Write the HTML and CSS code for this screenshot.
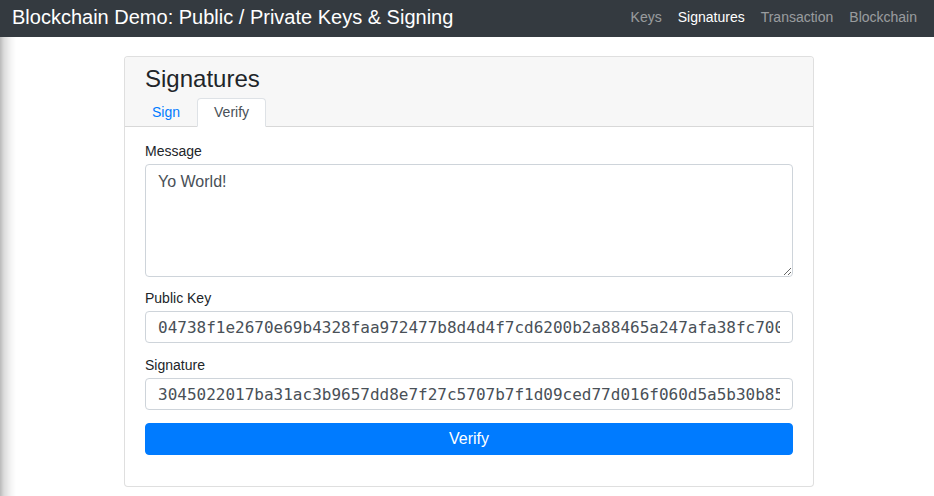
FILE: index.html
```html
<!DOCTYPE html>
<html lang="en">
<head>
<meta charset="utf-8">
<title>Blockchain Demo: Public / Private Keys &amp; Signing</title>
<link rel="stylesheet" href="styles.css">
</head>
<body>
<nav class="navbar">
  <a class="brand" href="#">Blockchain Demo: Public / Private Keys &amp; Signing</a>
  <ul class="nav-links">
    <li><a href="#">Keys</a></li>
    <li><a href="#" class="active">Signatures</a></li>
    <li><a href="#">Transaction</a></li>
    <li><a href="#">Blockchain</a></li>
  </ul>
</nav>
<div class="edge-shadow"></div>
<main class="main">
  <section class="card">
    <header class="card-header">
      <h4 class="card-title">Signatures</h4>
      <ul class="tabs">
        <li><a href="#" class="tab">Sign</a></li>
        <li><a href="#" class="tab tab-active">Verify</a></li>
      </ul>
    </header>
    <div class="card-body">
      <div class="group">
        <label class="label" for="msg">Message</label>
        <textarea id="msg" class="control textarea">Yo World!</textarea>
      </div>
      <div class="group group-mid">
        <label class="label" for="pub">Public Key</label>
        <input id="pub" class="control mono" type="text" value="04738f1e2670e69b4328faa972477b8d4d4f7cd6200b2a88465a247afa38fc7005d8a7e0c3b1a9f2e4d6c8b0a2e4f6d8c0b2a4e6f8d0c2b4a6e8f0d2c4b6a8e0">
      </div>
      <div class="group group-last">
        <label class="label" for="sig">Signature</label>
        <input id="sig" class="control mono" type="text" value="3045022017ba31ac3b9657dd8e7f27c5707b7f1d09ced77d016f060d5a5b30b85c0221009a7d3e5f1b2c4d6e8f0a1b3c5d7e9f0a2b4c6d8e0f1a3b5c7d9e">
      </div>
      <button class="btn" type="button">Verify</button>
    </div>
  </section>
</main>
</body>
</html>
```

FILE: styles.css
```css
* { box-sizing: border-box; }

html, body {
  margin: 0;
  padding: 0;
  background: #fff;
  color: #212529;
  font-family: "Liberation Sans", Arial, sans-serif;
  font-size: 14px;
}

.navbar {
  height: 37px;
  background: #343a40;
  display: flex;
  align-items: center;
  justify-content: space-between;
  padding: 0 9px 4px 12px;
}

.brand {
  color: #fff;
  text-decoration: none;
  font-size: 20px;
  line-height: 24px;
}

.nav-links {
  list-style: none;
  margin: 0;
  padding: 0;
  display: flex;
}

.nav-links a {
  display: block;
  padding: 0 8px;
  font-size: 14px;
  line-height: 20px;
  color: rgba(255, 255, 255, 0.5);
  text-decoration: none;
}

.nav-links a.active {
  color: #fff;
}

.edge-shadow {
  position: fixed;
  left: 0;
  top: 37px;
  bottom: 0;
  width: 16px;
  background: linear-gradient(to right, rgba(0,0,0,0.27) 0, rgba(0,0,0,0.14) 4px, rgba(0,0,0,0.04) 11px, rgba(0,0,0,0) 16px);
  pointer-events: none;
}

.main {
  padding: 19px 0 0 124px;
}

.card {
  width: 690px;
  border: 1px solid rgba(0, 0, 0, 0.125);
  border-radius: 4px;
  background: #fff;
}

.card-header {
  background: #f7f7f7;
  border-bottom: 1px solid rgba(0, 0, 0, 0.125);
  border-radius: 3px 3px 0 0;
  padding: 7px 20px 0;
}

.card-title {
  margin: 0 0 5px;
  font-size: 24px;
  font-weight: 400;
  line-height: 29px;
  color: #212529;
}

.tabs {
  list-style: none;
  margin: 0 0 -1px -10px;
  padding: 0;
  display: flex;
}

.tab {
  display: block;
  padding: 4px 16px;
  font-size: 14px;
  line-height: 19px;
  color: #007bff;
  text-decoration: none;
  border: 1px solid transparent;
  border-radius: 4px 4px 0 0;
}

.tab-active {
  color: #495057;
  background: #fff;
  border-color: #dee2e6 #dee2e6 #fff;
}

.card-body {
  padding: 16px 20px 31px;
}

.group {
  margin-bottom: 13px;
}

.group-mid {
  margin-bottom: 14px;
}

.group-last {
  margin-bottom: 13px;
}

.label {
  display: block;
  font-size: 14px;
  line-height: 17px;
  margin-bottom: 4px;
  color: #212529;
}

.control {
  display: block;
  width: 100%;
  border: 1px solid #ced4da;
  border-radius: 4px;
  background: #fff;
  color: #495057;
  font-family: "Liberation Sans", Arial, sans-serif;
  font-size: 16px;
  line-height: 24px;
  padding: 6px 12px;
  margin: 0;
  outline: none;
}

.textarea {
  height: 113px;
  padding: 5px 12px;
  resize: vertical;
}

.mono {
  height: 32px;
  padding: 0 12px;
  font-family: "DejaVu Sans Mono", monospace;
  font-size: 16px;
  color: #495057;
}

.btn {
  display: block;
  width: 100%;
  height: 32px;
  border: 1px solid #007bff;
  border-radius: 4px;
  background: #007bff;
  color: #fff;
  font-family: "Liberation Sans", Arial, sans-serif;
  font-size: 16px;
  line-height: 24px;
  padding: 0 12px;
  cursor: pointer;
}
```
